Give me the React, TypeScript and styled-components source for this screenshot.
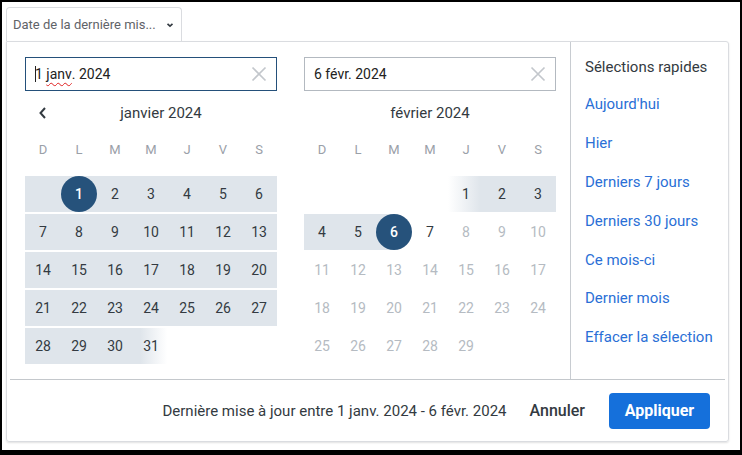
import React from "react";
import styled, { createGlobalStyle, css } from "styled-components";

const GlobalStyle = createGlobalStyle`
  html, body {
    margin: 0;
    background: #000;
  }
  body {
    font-family: Roboto, "Liberation Sans", sans-serif;
    color: #333a41;
  }
`;

const BAND = "#dfe5eb";

const Frame = styled.div`
  width: 738px;
  height: 448px;
  margin: 2px;
  background: #fff;
  padding: 5px 0 0 4px;
  box-sizing: border-box;
`;

const Trigger = styled.button`
  display: flex;
  align-items: center;
  justify-content: space-between;
  width: 176px;
  height: 34px;
  padding: 0 6px 0 6px;
  box-sizing: border-box;
  border: 1px solid #dadce0;
  border-bottom: none;
  border-radius: 4px 4px 0 0;
  background: #fff;
  font-family: inherit;
  font-size: 13px;
  color: #5f6368;
  cursor: pointer;
`;

const Panel = styled.div`
  width: 723px;
  height: 401px;
  box-sizing: border-box;
  border: 1px solid #dadce0;
  border-radius: 0 3px 3px 3px;
  box-shadow: 0 1px 2px rgba(0, 0, 0, 0.12);
  display: flex;
  flex-direction: column;
`;

const Main = styled.div`
  display: flex;
  height: 337px;
`;

const Calendars = styled.div`
  width: 564px;
  box-sizing: border-box;
  border-right: 1px solid #c8ccd1;
  padding: 15px 0 0 18px;
  display: flex;
  gap: 27px;
`;

const Month = styled.div`
  width: 252px;
`;

const InputBox = styled.div<{ $focused?: boolean }>`
  height: 34px;
  box-sizing: border-box;
  border: 1px solid ${(p) => (p.$focused ? "#24507a" : "#b3b9c0")};
  display: flex;
  align-items: center;
  padding: 0 9px 1px 9px;
  font-size: 14px;
  color: #222;
`;

const InputText = styled.span`
  flex: 1;
  display: flex;
  align-items: center;
`;

const Caret = styled.span`
  width: 1px;
  height: 16px;
  background: #222;
  margin-right: -1px;
`;

const Misspelled = styled.span`
  text-decoration: underline wavy #e02020;
  text-decoration-thickness: 1px;
  text-underline-offset: 3px;
`;

const ClearBtn = styled.span`
  display: flex;
  color: #c3c7cc;
`;

const Header = styled.div`
  height: 44px;
  display: flex;
  align-items: center;
  font-size: 15px;
  color: #333a41;
`;

const ArrowBtn = styled.span`
  width: 36px;
  display: flex;
  justify-content: center;
  color: #333a41;
`;

const MonthLabel = styled.div<{ $withArrow?: boolean }>`
  flex: 1;
  text-align: center;
  ${(p) => p.$withArrow && css`padding-right: 16px;`}
`;

const Weekdays = styled.div`
  display: grid;
  grid-template-columns: repeat(7, 36px);
  height: 28px;
  align-items: center;
  font-size: 13px;
  color: #9aa0a8;
  text-align: center;
  margin-bottom: 13px;
`;

const Weeks = styled.div`
  display: grid;
  grid-template-columns: repeat(7, 36px);
  grid-auto-rows: 36px;
  row-gap: 2px;
`;

type Band = "none" | "full" | "fadeIn" | "fadeOut" | "leftHalf";

const bandBg: Record<Band, string> = {
  none: "transparent",
  full: BAND,
  fadeIn: `linear-gradient(to right, #fff 0%, ${BAND} 90%)`,
  fadeOut: `linear-gradient(to right, ${BAND} 20%, #fff 95%)`,
  leftHalf: `linear-gradient(to right, ${BAND} 50%, transparent 50%)`,
};

const Cell = styled.div<{ $band: Band }>`
  display: flex;
  align-items: center;
  justify-content: center;
  background: ${(p) => bandBg[p.$band]};
`;

const DayNum = styled.span<{ $selected?: boolean; $disabled?: boolean }>`
  width: 36px;
  height: 36px;
  border-radius: 50%;
  display: flex;
  align-items: center;
  justify-content: center;
  font-size: 14px;
  color: ${(p) => (p.$disabled ? "#b5bbc2" : "#333a41")};
  ${(p) =>
    p.$selected &&
    css`
      background: #26527b;
      color: #fff;
      font-weight: 500;
    `}
`;

const Quick = styled.div`
  flex: 1;
  padding: 6px 0 0 14px;
  display: flex;
  flex-direction: column;
`;

const QuickTitle = styled.div`
  height: 37px;
  display: flex;
  align-items: center;
  font-size: 15px;
  color: #333a41;
`;

const QuickLink = styled.a`
  height: 38.8px;
  display: flex;
  align-items: center;
  font-size: 15px;
  color: #2a6fd6;
  text-decoration: none;
  cursor: pointer;
`;

const Footer = styled.div`
  flex: 1;
  margin: 0 3px;
  border-top: 1px solid #c4c8cc;
  display: flex;
  align-items: center;
  justify-content: flex-end;
  padding-right: 15px;
  font-size: 15px;
  color: #333a41;
`;

const Summary = styled.span`
  margin-right: 23px;
`;

const CancelBtn = styled.button`
  border: none;
  background: none;
  font-family: inherit;
  font-size: 16px;
  font-weight: 500;
  color: #333a41;
  padding: 0;
  margin-right: 24px;
  cursor: pointer;
`;

const ApplyBtn = styled.button`
  width: 101px;
  height: 36px;
  border: none;
  border-radius: 4px;
  background: #1570db;
  color: #fff;
  font-family: inherit;
  font-size: 16px;
  font-weight: 700;
  cursor: pointer;
`;

type Day = { n?: number; band: Band; selected?: boolean; disabled?: boolean };

const WEEKDAYS = ["D", "L", "M", "M", "J", "V", "S"];

const buildJan = (): Day[] => {
  const days: Day[] = [{ band: "full" }];
  for (let n = 1; n <= 31; n++) {
    days.push({ n, band: n === 31 ? "fadeOut" : "full", selected: n === 1 });
  }
  return days;
};

const buildFeb = (): Day[] => {
  const days: Day[] = [0, 1, 2, 3].map(() => ({ band: "none" as Band }));
  for (let n = 1; n <= 29; n++) {
    let band: Band = "none";
    if (n === 1) band = "fadeIn";
    else if (n < 6) band = "full";
    else if (n === 6) band = "leftHalf";
    days.push({ n, band, selected: n === 6, disabled: n > 7 });
  }
  return days;
};

const Chevron = () => (
  <svg width="10" height="10" viewBox="0 0 10 10">
    <path d="M2.5 3.8 L5 6.2 L7.5 3.8" fill="none" stroke="#333a41" strokeWidth="1.6" />
  </svg>
);

const PrevIcon = () => (
  <svg width="10" height="14" viewBox="0 0 10 14">
    <path d="M7 2 L2.5 7 L7 12" fill="none" stroke="#333a41" strokeWidth="2" />
  </svg>
);

const ClearIcon = () => (
  <svg width="16" height="16" viewBox="0 0 16 16">
    <path d="M1.5 1.5 L14.5 14.5 M14.5 1.5 L1.5 14.5" stroke="currentColor" strokeWidth="1.7" />
  </svg>
);

type MonthProps = {
  label: string;
  days: Day[];
  withArrow?: boolean;
  input: React.ReactNode;
  focused?: boolean;
};

const MonthView = ({ label, days, withArrow, input, focused }: MonthProps) => (
  <Month>
    <InputBox $focused={focused}>
      <InputText>{input}</InputText>
      <ClearBtn>
        <ClearIcon />
      </ClearBtn>
    </InputBox>
    <Header>
      {withArrow && (
        <ArrowBtn>
          <PrevIcon />
        </ArrowBtn>
      )}
      <MonthLabel $withArrow={withArrow}>{label}</MonthLabel>
    </Header>
    <Weekdays>
      {WEEKDAYS.map((d, i) => (
        <span key={i}>{d}</span>
      ))}
    </Weekdays>
    <Weeks>
      {days.map((d, i) => (
        <Cell key={i} $band={d.band}>
          {d.n && (
            <DayNum $selected={d.selected} $disabled={d.disabled}>
              {d.n}
            </DayNum>
          )}
        </Cell>
      ))}
    </Weeks>
  </Month>
);

const QUICK = [
  "Aujourd'hui",
  "Hier",
  "Derniers 7 jours",
  "Derniers 30 jours",
  "Ce mois-ci",
  "Dernier mois",
  "Effacer la sélection",
];

export default function App() {
  return (
    <>
      <GlobalStyle />
      <Frame>
        <Trigger>
          Date de la dernière mis...
          <Chevron />
        </Trigger>
        <Panel>
          <Main>
            <Calendars>
              <MonthView
                label="janvier 2024"
                days={buildJan()}
                withArrow
                focused
                input={
                  <>
                    <Caret />1&nbsp;<Misspelled>janv</Misspelled>. 2024
                  </>
                }
              />
              <MonthView label="février 2024" days={buildFeb()} input="6 févr. 2024" />
            </Calendars>
            <Quick>
              <QuickTitle>Sélections rapides</QuickTitle>
              {QUICK.map((q) => (
                <QuickLink key={q}>{q}</QuickLink>
              ))}
            </Quick>
          </Main>
          <Footer>
            <Summary>Dernière mise à jour entre 1 janv. 2024 - 6 févr. 2024</Summary>
            <CancelBtn>Annuler</CancelBtn>
            <ApplyBtn>Appliquer</ApplyBtn>
          </Footer>
        </Panel>
      </Frame>
    </>
  );
}
